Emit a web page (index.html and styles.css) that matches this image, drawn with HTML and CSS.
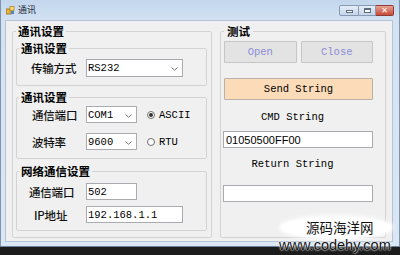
FILE: index.html
```html
<!DOCTYPE html>
<html lang="zh-cn">
<head>
    <meta charset="UTF-8">
    <title>通讯</title>
<link rel="stylesheet" href="styles.css">
</head>
<body>
    <div class="window">
        <div class="titlebar">
            <svg class="app_icon" width="9" height="9" viewBox="0 0 9 9">
                <rect x="0" y="3" width="5" height="5" fill="#e8b23a" stroke="#9a6a10" stroke-width="0.8"/>
                <rect x="4" y="0.5" width="4" height="4" fill="#f6dc7a" stroke="#b08a20" stroke-width="0.8"/>
                <rect x="5" y="5" width="3" height="3" fill="#4f86c8"/>
            </svg>
            <span class="title">通讯</span>
            <div class="caption_buttons">
                <span class="cap cap_min"><i></i></span>
                <span class="cap cap_max"><i></i></span>
                <span class="cap cap_close">✕</span>
            </div>
        </div>

        <div class="client">
            <!-- 左边：通讯设置 -->
            <fieldset class="group outer">
                <legend>通讯设置</legend>

                <fieldset class="group inner box1">
                    <legend>通讯设置</legend>
                    <div class="row">
                        <span class="lbl">传输方式</span>
                        <div class="combo wide"><span>RS232</span><svg class="arrow" width="7" height="4" viewBox="0 0 7 4"><polyline points="0.5,0.5 3.5,3.2 6.5,0.5" fill="none" stroke="#777" stroke-width="1"/></svg></div>
                    </div>
                </fieldset>

                <fieldset class="group inner box2">
                    <legend>通讯设置</legend>
                    <div class="row">
                        <span class="lbl lbl_b">通信端口</span>
                        <div class="combo narrow"><span>COM1</span><svg class="arrow" width="7" height="4" viewBox="0 0 7 4"><polyline points="0.5,0.5 3.5,3.2 6.5,0.5" fill="none" stroke="#777" stroke-width="1"/></svg></div>
                        <label class="radio"><span class="dot checked"></span>ASCII</label>
                    </div>
                    <div class="row row_gap">
                        <span class="lbl lbl_b">波特率</span>
                        <div class="combo narrow"><span>9600</span><svg class="arrow" width="7" height="4" viewBox="0 0 7 4"><polyline points="0.5,0.5 3.5,3.2 6.5,0.5" fill="none" stroke="#777" stroke-width="1"/></svg></div>
                        <label class="radio"><span class="dot"></span>RTU</label>
                    </div>
                </fieldset>

                <fieldset class="group inner box3">
                    <legend>网络通信设置</legend>
                    <div class="row">
                        <span class="lbl lbl_c">通信端口</span>
                        <div class="textbox narrow">502</div>
                    </div>
                    <div class="row row_gap2">
                        <span class="lbl lbl_d">IP地址</span>
                        <div class="textbox wide">192.168.1.1</div>
                    </div>
                </fieldset>
            </fieldset>

            <!-- 右边：测试 -->
            <fieldset class="group test">
                <legend>测试</legend>
                <div class="btn_row">
                    <button class="btn disabled">Open</button>
                    <button class="btn disabled">Close</button>
                </div>
                <button class="btn send">Send String</button>
                <div class="caption_text">CMD String</div>
                <div class="textbox long cmd">01050500FF00</div>
                <div class="caption_text second">Return String</div>
                <div class="textbox long ret"></div>
            </fieldset>
        </div>
    </div>

    <div class="watermark">
        <div class="wm_cn">源码海洋网</div>
        <div class="wm_en">www.codehy.com</div>
    </div>
</body>
</html>
```

FILE: styles.css
```css
*{
    box-sizing:border-box;
}

body{
    margin:0;
    width:400px;
    height:255px;
    overflow:hidden;
    position:relative;
    background:#1c1c1c;
    font-family:"Noto Sans CJK SC",sans-serif;
    color:#000;
}

.window{
    height:247px;
    display:flex;
    flex-direction:column;
    background:linear-gradient(#c2d6ed,#d3e2f3 20px,#dbe7f4);
    border-left:1px solid #7f93ab;
    border-right:1px solid #7f93ab;
    border-bottom:1px solid #6d7f96;
}

.titlebar{
    height:20px;
    flex:none;
    display:flex;
    align-items:center;
    padding-left:5px;
}

.app_icon{
    margin-top:1px;
}

.title{
    font-size:9px;
    line-height:10px;
    margin-left:3px;
    color:#1e2a3a;
}

.caption_buttons{
    margin-left:auto;
    align-self:flex-start;
    margin-top:5px;
    margin-right:5px;
    display:flex;
}

.cap{
    height:11px;
    display:flex;
    align-items:center;
    justify-content:center;
    border:1px solid #8799b2;
    background:linear-gradient(#e6eef8,#c6d5e8);
}

.cap_min{
    width:20px;
    border-radius:2px 0 0 2px;
}

.cap_min i{
    width:7px;
    height:3px;
    margin-top:2px;
    background:#fff;
    border:1px solid #5b6c82;
}

.cap_max{
    width:17px;
    border-left:none;
}

.cap_max i{
    width:7px;
    height:5px;
    background:#fff;
    border:1px solid #5b6c82;
    border-top-width:2px;
}

.cap_close{
    width:18px;
    border-color:#8e3b33;
    border-left:none;
    border-radius:0 2px 2px 0;
    background:linear-gradient(#e8a392,#c64a3b);
    color:#fff;
    font-size:8px;
    font-weight:bold;
    font-family:"DejaVu Sans",sans-serif;
}

.client{
    flex:1;
    margin:0 6px 4px 4px;
    background:#f0f0f0;
    border:1px solid #b4c4d6;
    display:flex;
    align-items:stretch;
    gap:8px;
    padding:4px 6px 3px 6px;
}

.group{
    margin:0;
    min-width:0;
    border:1px solid #d3d3d3;
    border-radius:2px;
}

.group legend{
    padding:0 2px;
    font-size:11.5px;
    line-height:12px;
    font-weight:bold;
}

.outer{
    width:200px;
    flex:none;
    padding:0 3px 4px 3px;
}

.inner{
    margin:5px 1px 0 0;
    padding:0 2px;
}

.box1{
    padding-top:5px;
    padding-bottom:8px;
}

.box2{
    margin-top:5px;
    padding-top:3px;
    padding-bottom:8px;
}

.box3{
    margin-top:6px;
    padding-top:6px;
    padding-bottom:7px;
}

.row{
    display:flex;
    align-items:center;
}

.row_gap{
    margin-top:10px;
}

.row_gap2{
    margin-top:6px;
}

.lbl{
    flex:none;
    width:67px;
    padding-left:12px;
    font-size:11.5px;
    line-height:14px;
    font-weight:500;
    letter-spacing:-0.2px;
    color:#111;
}

.lbl_b{
    padding-left:13px;
}

.lbl_c{
    padding-left:10px;
}

.lbl_d{
    padding-left:15px;
}

.combo,
.textbox{
    display:flex;
    align-items:center;
    background:#fff;
    border:1px solid #a9abb1;
    font-family:"Liberation Mono",monospace;
    font-size:10.5px;
    line-height:12px;
    white-space:pre;
}

.combo{
    height:18px;
    justify-content:space-between;
    padding:0 4px 0 1px;
}

.combo.narrow{
    height:17px;
}

.textbox{
    height:17px;
    padding-left:1px;
}

.wide{
    width:97px;
}

.narrow{
    width:51px;
}

.arrow{
    margin-top:2px;
}

.radio{
    display:flex;
    align-items:center;
    margin-left:10px;
    font-family:"Liberation Mono",monospace;
    font-size:10.5px;
}

.dot{
    width:8px;
    height:8px;
    margin-right:4px;
    border:1px solid #6d6d6d;
    border-radius:50%;
    background:#fff;
    display:flex;
    align-items:center;
    justify-content:center;
}

.dot.checked::after{
    content:"";
    width:4px;
    height:4px;
    border-radius:50%;
    background:#333;
}

.test{
    flex:1;
    padding:0 12px 0 3px;
    display:flex;
    flex-direction:column;
}

.test legend{
    padding:0 3px;
}

.btn_row{
    display:flex;
    gap:4px;
    margin-top:4px;
}

.btn{
    height:22px;
    margin:0;
    padding:0;
    border:1px solid #b4b4b4;
    border-radius:1px;
    background:#e1e1e1;
    font-family:"Liberation Mono",monospace;
    font-size:10.5px;
    color:#000;
}

.btn_row .btn{
    flex:1;
}

.btn.disabled{
    color:#8c8cd6;
    background:#e3e3e3;
    border-color:#c6c6c6;
}

.send{
    margin-top:15px;
    background:#fcdcb8;
    border-color:#b8b2aa;
}

.caption_text{
    margin-top:11px;
    padding-right:12px;
    text-align:center;
    font-family:"Liberation Mono",monospace;
    font-size:10.5px;
    line-height:12px;
}

.caption_text.second{
    margin-top:10px;
}

.long{
    width:150px;
    margin-left:-1px;
}

.cmd{
    margin-top:8px;
    font-family:"Liberation Sans",sans-serif;
    font-size:11px;
    padding-left:2px;
}

.ret{
    margin-top:15px;
}

/* 水印 */
.watermark{
    position:absolute;
    left:279px;
    top:217px;
    width:125px;
}

.wm_cn{
    margin-left:2px;
    width:110px;
    height:21px;
    padding-left:25px;
    padding-top:3px;
    border-radius:50%;
    background:#fff;
    box-shadow:0 0 4px 2px #fff;
    font-size:13.5px;
    line-height:15px;
    color:#111;
}

.wm_en{
    margin-top:0;
    font-family:"Liberation Sans",sans-serif;
    font-size:14.5px;
    line-height:15px;
    color:#111;
    text-shadow:0 0 2px #fff,0 0 2px #fff;
}
```
